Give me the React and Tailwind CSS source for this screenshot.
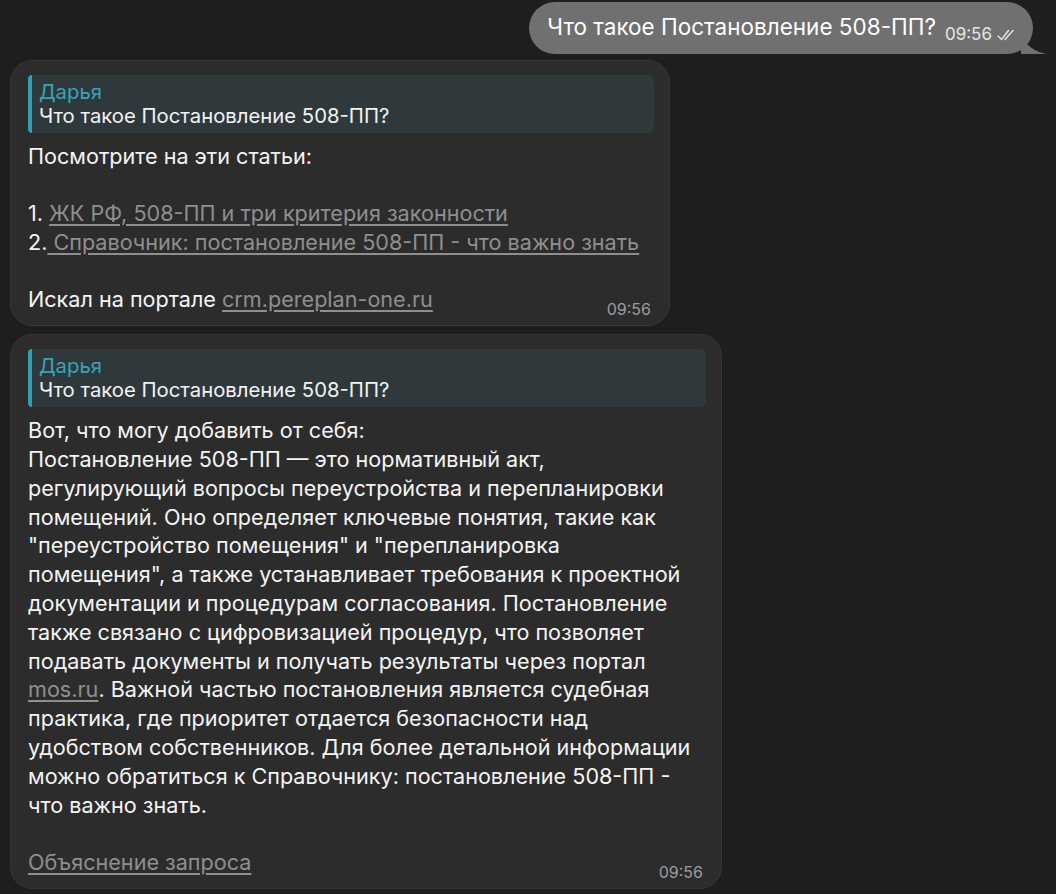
import React from "react";

const quoteName = "Дарья";
const quoteText = "Что такое Постановление 508-ПП?";

function Quote() {
  return (
    <div className="flex rounded-[6px] bg-[#2f393c]">
      <div className="w-[4px] shrink-0 rounded-l-[6px] bg-[#2f9fb6]" />
      <div className="flex flex-col py-[5px] pl-[7px] pr-3 text-[20.3px] leading-[24px]">
        <span className="text-[#3aa3b9]">{quoteName}</span>
        <span className="text-[#f2f2f2]">{quoteText}</span>
      </div>
    </div>
  );
}

function Link({ children }) {
  return <span className="text-[#8f8f8f] underline decoration-[#8f8f8f] underline-offset-[3px]">{children}</span>;
}

function Time() {
  return <span className="relative top-[8px] text-[16px] text-[#9c9c9c]">09:56</span>;
}

function Bubble({ width, children }) {
  return (
    <div
      className="rounded-[22px] border border-[#363636] bg-[#2c2c2c] pl-[17px] pr-[15px] pt-[14px] pb-[9px]"
      style={{ width }}
    >
      <Quote />
      <div className="mt-[9px] whitespace-nowrap text-[21.6px] leading-[28.8px] text-[#f4f4f4]">{children}</div>
    </div>
  );
}

function LastRow({ children }) {
  return (
    <div className="flex items-baseline justify-between pr-[3px]">
      <div>{children}</div>
      <Time />
    </div>
  );
}

export default function App() {
  const answer = [
    "Вот, что могу добавить от себя:",
    "Постановление 508-ПП — это нормативный акт,",
    "регулирующий вопросы переустройства и перепланировки",
    "помещений. Оно определяет ключевые понятия, такие как",
    "\"переустройство помещения\" и \"перепланировка",
    "помещения\", а также устанавливает требования к проектной",
    "документации и процедурам согласования. Постановление",
    "также связано с цифровизацией процедур, что позволяет",
    "подавать документы и получать результаты через портал",
  ];
  const answer2 = [
    "практика, где приоритет отдается безопасности над",
    "удобством собственников. Для более детальной информации",
    "можно обратиться к Справочнику: постановление 508-ПП -",
    "что важно знать.",
  ];

  return (
    <div className="min-h-[894px] bg-[#1e1e1e] px-[10px] pt-[2px] font-['Inter',sans-serif]">
      {/* outgoing */}
      <div className="flex justify-end pr-[13px]">
        <div className="relative flex items-baseline rounded-full bg-[#707070] pl-[18px] pr-[18px] pt-[10px] pb-[11px]">
          <span className="text-[22.5px] leading-[30px] text-white">Что такое Постановление 508-ПП?</span>
          <span className="relative top-[5px] ml-[9px] flex items-center gap-[5px] text-[17px] text-[#e6e6e6]">
            09:56
            <svg width="18" height="12" viewBox="0 0 18 12" fill="none" stroke="#e6e6e6" strokeWidth="1.4" strokeLinecap="round" strokeLinejoin="round">
              <path d="M1 7l3.5 3.5L11.5 1.5" />
              <path d="M8 10.5L16 1.5" />
            </svg>
          </span>
          <svg className="absolute right-[-14px] bottom-0" width="26" height="18" viewBox="0 0 26 18">
            <path d="M0 0 C6 10 14 16 26 18 L0 18 Z" fill="#707070" />
          </svg>
        </div>
      </div>

      <div className="mt-[6px] flex flex-col items-start gap-[8px]">
        <Bubble width={660}>
          <div>Посмотрите на эти статьи:</div>
          <div>&nbsp;</div>
          <div>
            1. <Link>ЖК РФ, 508-ПП и три критерия законности</Link>
          </div>
          <div>
            2.<Link> Справочник: постановление 508-ПП - что важно знать</Link>
          </div>
          <div>&nbsp;</div>
          <LastRow>
            Искал на портале <Link>crm.pereplan-one.ru</Link>
          </LastRow>
        </Bubble>

        <Bubble width={712}>
          {answer.map((l) => (
            <div key={l}>{l}</div>
          ))}
          <div>
            <Link>mos.ru</Link>. Важной частью постановления является судебная
          </div>
          {answer2.map((l) => (
            <div key={l}>{l}</div>
          ))}
          <div>&nbsp;</div>
          <LastRow>
            <Link>Объяснение запроса</Link>
          </LastRow>
        </Bubble>
      </div>
    </div>
  );
}
